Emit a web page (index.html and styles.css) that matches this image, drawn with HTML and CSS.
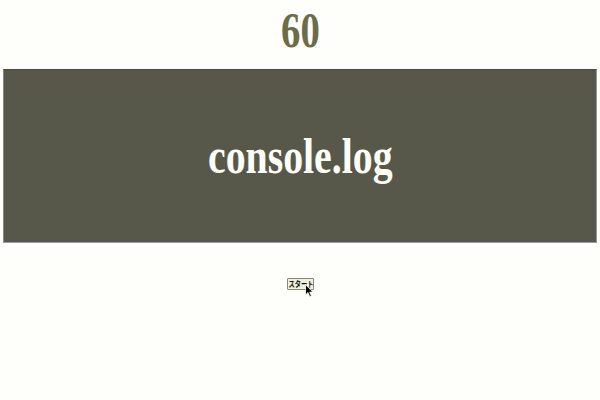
FILE: index.html
```html
<!DOCTYPE html>
<html lang="ja">
<head>
<meta charset="utf-8">
<title>console.log</title>
<link rel="stylesheet" href="styles.css">
</head>
<body>
<h1 class="count"><span class="squeeze">60</span></h1>
<div class="console"><span class="squeeze">console.log</span></div>
<div class="controls">
  <span class="btn-wrap">
    <button class="start" type="button"><span class="btn-label">スタート</span></button>
    <svg class="cursor" width="9" height="14" viewBox="0 0 9 14" aria-hidden="true">
      <path d="M0.5 0.5 L0.5 11 L3 8.6 L4.8 12.8 L6.4 12.1 L4.7 8.1 L8 8.1 Z" fill="#000" stroke="#fff" stroke-width="0.8"/>
    </svg>
  </span>
</div>
</body>
</html>
```
FILE: styles.css
```css
html, body {
  margin: 0;
  padding: 0;
}
body {
  background: #fefefa;
  font-family: "Liberation Serif", "Times New Roman", serif;
  width: 600px;
  height: 400px;
  overflow: hidden;
}
.squeeze {
  display: inline-block;
  transform: scaleX(0.76);
  transform-origin: center;
}
.count {
  margin: 0 0 9px 0;
  font-size: 51px;
  line-height: 60px;
  font-weight: bold;
  color: #6d6c48;
  text-align: center;
}
.console {
  margin: 0 3px;
  height: 172px;
  background: #58584a;
  border-style: solid;
  border-width: 1px;
  border-color: #4a4a40 #9a9a9a #9a9ab0 #8a8a8a;
  display: flex;
  align-items: center;
  justify-content: center;
  color: #fdfdf8;
  font-size: 51px;
  font-weight: bold;
  line-height: 51px;
}
.console .squeeze {
  transform: scaleX(0.78);
}
.controls {
  margin-top: 35px;
  display: flex;
  justify-content: center;
}
.btn-wrap {
  position: relative;
  display: block;
  margin-left: 1px;
}
.start {
  display: block;
  width: 27px;
  height: 12px;
  padding: 0;
  margin: 0;
  border: 1px solid #8a8a7a;
  border-radius: 1px;
  background: #efefdc;
  font-family: "Noto Sans CJK JP", sans-serif;
  font-size: 8px;
  font-weight: bold;
  line-height: 10px;
  color: #111;
  overflow: hidden;
}
.btn-label {
  display: inline-block;
  transform: scaleX(0.78);
  transform-origin: center;
  white-space: nowrap;
  margin: 0 -6px;
}
.cursor {
  position: absolute;
  left: 18px;
  top: 6px;
}
```
